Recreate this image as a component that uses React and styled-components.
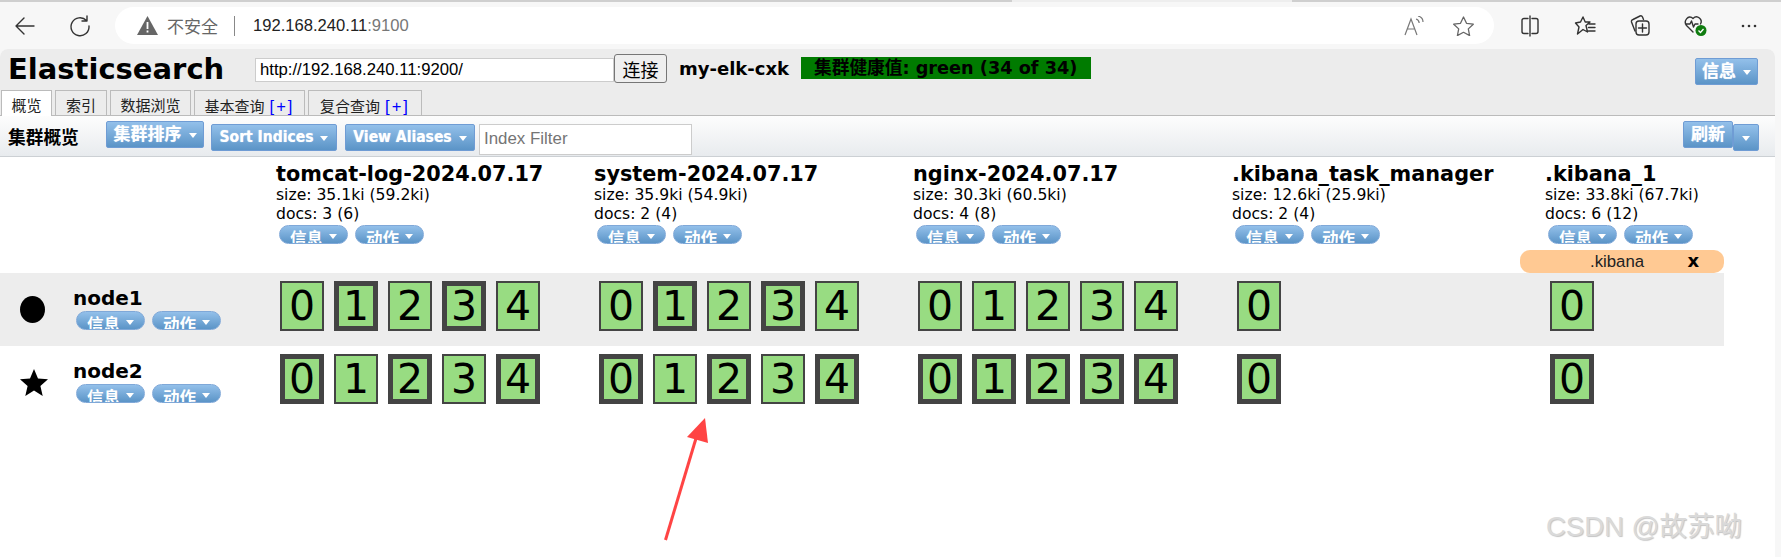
import React from 'react'
import styled, { createGlobalStyle } from 'styled-components'

const CJK = '"Noto Sans CJK SC"'
const VERDANA = `"DejaVu Sans", ${CJK}, sans-serif`
const ARIAL = `"Liberation Sans", ${CJK}, sans-serif`

const Global = createGlobalStyle`
  html, body { margin: 0; padding: 0; background: #f7f7f7; }
  * { box-sizing: border-box; }
`

const Window = styled.div`
  position: relative;
  width: 1781px;
  height: 557px;
  overflow: hidden;
  background: #f7f7f7;
  display: flex;
  flex-direction: column;
`

/* ---- browser bar ---- */
const TopEdge = styled.div`
  height: 2px;
  display: grid;
  grid-template-columns: 1012px 280px 1fr;
  background: #eeeeee;
`
const TopSeg = styled.div`
  background: ${p => (p.$on ? '#cfcfcf' : 'transparent')};
`
const BrowserBar = styled.div`
  height: 47px;
  display: flex;
  align-items: center;
  padding: 0 0 0 15px;
`
const BarIcon = styled.div`
  width: ${p => p.$w || 20}px;
  height: 22px;
  margin-left: ${p => p.$ml || 0}px;
  display: flex;
  align-items: center;
  justify-content: center;
  flex: none;
  svg { display: block; overflow: visible; }
`
const UrlPill = styled.div`
  width: 1379px;
  height: 37px;
  margin-left: 25px;
  background: #fff;
  border-radius: 19px;
  display: flex;
  align-items: center;
  padding-left: 22px;
  flex: none;
`
const Insecure = styled.span`
  font: 17px ${ARIAL};
  color: #666;
  margin-left: 9px;
`
const Sep = styled.span`
  width: 1px;
  height: 20px;
  background: #888;
  margin: 0 18px 0 16px;
`
const Host = styled.span`
  font: 16.6px ${ARIAL};
  color: #222;
`
const Port = styled.span`
  font: 16.6px ${ARIAL};
  color: #777;
`
const PillEnd = styled.div`
  margin-left: auto;
  display: flex;
  align-items: center;
  padding-right: 20px;
  gap: 29px;
`

/* ---- page ---- */
const Page = styled.div`
  flex: 1;
  margin-right: 6px;
  background: #fff;
  border-radius: 8px 8px 0 0;
  overflow: hidden;
  display: flex;
  flex-direction: column;
`
const Header = styled.div`
  height: 67px;
  background: #ececec;
  border-bottom: 1px solid #bbb;
  position: relative;
  flex: none;
`
const HeaderRow = styled.div`
  height: 41px;
  display: flex;
  align-items: flex-start;
  padding-left: 8px;
`
const Title = styled.div`
  font: bold 29px/40px ${VERDANA};
  color: #000;
  width: 247px;
  flex: none;
`
const UriInput = styled.input`
  width: 359px;
  height: 24px;
  margin-top: 9px;
  border: 1px solid #ccc;
  background: #fff;
  font: 16.7px ${ARIAL};
  padding: 0 4px;
  color: #000;
  flex: none;
`
const Connect = styled.button`
  width: 53px;
  height: 29px;
  margin-top: 5px;
  border: 1px solid #767676;
  border-radius: 3px;
  background: #efefef;
  font: 18px ${ARIAL};
  color: #000;
  padding: 0;
  flex: none;
`
const ClusterName = styled.div`
  font: bold 18px/40px ${VERDANA};
  margin-left: 12px;
  width: 122px;
  white-space: nowrap;
  flex: none;
`
const Health = styled.div`
  width: 290px;
  height: 22px;
  margin-top: 8px;
  background: #007b00;
  font: bold 17.7px/22px ${VERDANA};
  color: #000;
  padding-left: 13px;
  white-space: nowrap;
  overflow: hidden;
  flex: none;
`
const HeaderEnd = styled.div`
  margin-left: auto;
  margin-right: 17px;
  margin-top: 9px;
`
const Tabs = styled.div`
  position: absolute;
  left: 1px;
  bottom: -1px;
  display: flex;
  gap: 3px;
  height: 26px;
`
const Tab = styled.div`
  width: ${p => p.$w}px;
  border: 1px solid #bbb;
  border-bottom: ${p => (p.$active ? 'none' : '1px solid #bbb')};
  background: ${p => (p.$active ? '#fff' : '#ececec')};
  font: 15px/30px ${ARIAL};
  color: #222;
  text-align: center;
  white-space: nowrap;
  overflow: hidden;
  b { font-weight: normal; font-size: 16.5px; color: #00f; margin-left: 5px; letter-spacing: 2px; }
`
const Toolbar = styled.div`
  height: 41px;
  flex: none;
  background: linear-gradient(#fdfdfd, #e8ebee);
  border-bottom: 1px solid #ccd0d4;
  display: flex;
  align-items: flex-start;
  padding-left: 8px;
  padding-top: 8px;
`
const ToolLabel = styled.div`
  font: bold 17.7px/24px ${CJK}, sans-serif;
  width: 98px;
  flex: none;
`
const Btn = styled.div`
  height: 27px;
  width: ${p => p.$w}px;
  margin-right: ${p => p.$mr || 0}px;
  margin-top: ${p => (p.$pressed ? -3 : 0)}px;
  border: 1px solid #6f9cd4;
  border-radius: 2px;
  background: linear-gradient(#93c0ea, #5b94c7);
  color: #fff;
  font: bold ${p => p.$fs || 15.5}px/25px ${VERDANA};
  font-stretch: condensed;
  display: flex;
  align-items: center;
  justify-content: center;
  gap: 7px;
  white-space: nowrap;
  flex: none;
  text-shadow: 0 0 1px #d8e8f8;
`
const Caret = styled.i`
  width: 0;
  height: 0;
  border-style: solid;
  border-width: 5px 4.5px 0;
  border-color: #fff transparent transparent;
  margin-top: 2px;
`
const Filter = styled.input`
  width: 213px;
  height: 31px;
  margin-left: -1px;
  border: 1px solid #ccc;
  background: #fff;
  font: 16.9px ${ARIAL};
  padding: 0 4px 2px;
  flex: none;
  &::placeholder { color: #757575; }
`
const ToolEnd = styled.div`
  margin-left: auto;
  margin-right: 16px;
  display: flex;
  align-items: flex-start;
`

/* ---- cluster overview ---- */
const Overview = styled.div`
  display: grid;
  grid-template-columns: 276px 318px 319px 319px 313px 179px;
  grid-template-rows: 116px 73px 73px;
  width: 1724px;
`
const IndexHead = styled.div`
  padding-top: 6px;
  position: relative;
`
const IndexName = styled.div`
  font: bold 20.8px/23px ${VERDANA};
  color: #000;
  white-space: nowrap;
`
const IndexStat = styled.div`
  font: 15.6px/19px ${VERDANA};
  color: #000;
  white-space: nowrap;
`
const PillRow = styled.div`
  display: flex;
  gap: 7px;
  margin: 1px 0 0 3px;
`
const Pill = styled.div`
  width: 69px;
  height: 19px;
  border: 1px solid #7fa8d8;
  border-radius: 10px;
  background: linear-gradient(#93c0ea, #5b94c7);
  color: #fff;
  font: bold 16.5px/25px ${CJK}, sans-serif;
  display: flex;
  align-items: flex-start;
  justify-content: center;
  gap: 6px;
  overflow: hidden;
  ${Caret} { margin-top: 8px; }
`
const Alias = styled.div`
  position: absolute;
  left: -25px;
  bottom: 0;
  width: 204px;
  height: 23px;
  background: #ffc993;
  border-radius: 10px;
  font: 16.8px/23px ${ARIAL};
  color: #222;
  padding-left: 70px;
  b {
    position: absolute;
    right: 25px;
    top: 0;
    font: bold 18px/22px ${VERDANA};
    color: #000;
  }
`
const NodeCell = styled.div`
  background: ${p => (p.$shaded ? '#ededed' : 'transparent')};
  display: flex;
  padding-left: 20px;
`
const Marker = styled.div`
  width: 53px;
  padding-top: ${p => p.$pt}px;
  flex: none;
`
const NodeName = styled.div`
  font: bold 20px/22px ${VERDANA};
  color: #000;
  margin: 14px 0 2px;
`
const Shards = styled.div`
  background: ${p => (p.$shaded ? '#ededed' : 'transparent')};
  display: flex;
  gap: 10px;
  padding: 8px 0 0 ${p => p.$pad}px;
`
const Shard = styled.div`
  width: 44px;
  height: 50px;
  border: ${p => (p.$primary ? 5 : 2)}px solid #444;
  background: #98dc82;
  font: 41px/${p => (p.$primary ? 40 : 46)}px ${VERDANA};
  color: #000;
  text-align: center;
`

/* ---- things drawn over the page ---- */
const ArrowMark = styled.svg`
  position: absolute;
  left: 650px;
  top: 410px;
`
const Watermark = styled.div`
  position: absolute;
  left: 1546px;
  top: 511px;
  font: 27.5px/32px ${ARIAL};
  color: #dadada;
  text-shadow: 1px 1px 1px #c4c4c4;
  white-space: nowrap;
`

const stroke = { fill: 'none', stroke: '#333', strokeWidth: 1.4, strokeLinecap: 'round', strokeLinejoin: 'round' }

const indices = [
  { name: 'tomcat-log-2024.07.17', size: '35.1ki (59.2ki)', docs: '3 (6)', shards: [0, 1, 2, 3, 4], p1: [1, 3], p2: [0, 2, 4], pad: 4 },
  { name: 'system-2024.07.17', size: '35.9ki (54.9ki)', docs: '2 (4)', shards: [0, 1, 2, 3, 4], p1: [1, 3], p2: [0, 2, 4], pad: 5 },
  { name: 'nginx-2024.07.17', size: '30.3ki (60.5ki)', docs: '4 (8)', shards: [0, 1, 2, 3, 4], p1: [], p2: [0, 1, 2, 3, 4], pad: 5 },
  { name: '.kibana_task_manager', size: '12.6ki (25.9ki)', docs: '2 (4)', shards: [0], p1: [], p2: [0], pad: 5 },
  { name: '.kibana_1', size: '33.8ki (67.7ki)', docs: '6 (12)', shards: [0], p1: [], p2: [0], pad: 5, alias: '.kibana' },
]

const Pills = () => (
  <PillRow>
    <Pill>信息<Caret /></Pill>
    <Pill>动作<Caret /></Pill>
  </PillRow>
)

const App = () => (
  <Window>
    <Global />
    <TopEdge>
      <TopSeg $on />
      <TopSeg />
      <TopSeg $on />
    </TopEdge>
    <BrowserBar>
      <BarIcon>
        <svg width="20" height="18" viewBox="0 0 20 18" {...stroke}><path d="M19 9H1M9 1 1 9l8 8" /></svg>
      </BarIcon>
      <BarIcon $ml={35}>
        <svg width="20" height="20" viewBox="0 0 20 20" {...stroke}><path d="M16.5 4.5A9 9 0 1 0 19 10M17 0v5h-5" /></svg>
      </BarIcon>
      <UrlPill>
        <svg width="21" height="19" viewBox="0 0 21 19"><path d="M10.5 0 21 19H0z" fill="#666" /><path d="M9.6 6h1.8v7H9.6zM9.6 14.5h1.8v2H9.6z" fill="#fff" /></svg>
        <Insecure>不安全</Insecure>
        <Sep />
        <Host>192.168.240.11</Host>
        <Port>:9100</Port>
        <PillEnd>
          <svg width="20" height="20" viewBox="0 0 20 20" fill="none" stroke="#777" strokeWidth="1.2"><path d="M1 19 7 3l6 16M3 13h8M12 3c2 .5 3 2 3.2 4M14 0c3 .8 5 3 5 6" /></svg>
          <svg width="21" height="20" viewBox="0 0 21 20" fill="none" stroke="#666" strokeWidth="1.3" strokeLinejoin="round"><path d="m10.5 1 3 6.3 6.8.9-5 4.7 1.3 6.7-6.1-3.3-6.1 3.3 1.3-6.7-5-4.7 6.8-.9z" /></svg>
        </PillEnd>
      </UrlPill>
      <BarIcon $ml={26}>
        <svg width="18" height="20" viewBox="0 0 18 20" {...stroke}><path d="M7 2.5H3a2 2 0 0 0-2 2v11a2 2 0 0 0 2 2h4M11 2.5h4a2 2 0 0 1 2 2v11a2 2 0 0 1-2 2h-4M9 0v20" /></svg>
      </BarIcon>
      <BarIcon $ml={35}>
        <svg width="21" height="20" viewBox="0 0 21 20" {...stroke}><path d="m8 1 2.2 5H15L11 9.500 12.500 16 8 13.500 2.500 18 4 11 0.500 7 5.500 6zM14 8h6M13.500 11.500H20M13.500 15H20" /></svg>
      </BarIcon>
      <BarIcon $ml={35}>
        <svg width="20" height="21" viewBox="0 0 20 21" {...stroke}><path d="M5 16 1.500 7A2 2 0 0 1 3 4.500L10 1a2 2 0 0 1 2.500 1l1 2.500" /><rect x="6" y="6" width="13" height="14" rx="3" /><path d="M12.500 9v8M8.500 13h8" /></svg>
      </BarIcon>
      <BarIcon $ml={34} $w={23}>
        <svg width="23" height="22" viewBox="0 0 23 22">
          <path d="M9 17 2.500 10.500C-1 6 4.500 -1 9 3.500 13.500 -1 19 5 16.500 9M1.500 9H6l1.500-3 2 6 1.500-3h3" {...stroke} />
          <circle cx="17" cy="15.500" r="5.500" fill="#107c10" />
          <path d="m14.500 15.500 2 2 3-3.500" fill="none" stroke="#fff" strokeWidth="1.300" />
        </svg>
      </BarIcon>
      <BarIcon $ml={34} $w={16}>
        <svg width="16" height="4" viewBox="0 0 16 4" fill="#333"><circle cx="2" cy="2" r="1.300" /><circle cx="8" cy="2" r="1.300" /><circle cx="14" cy="2" r="1.300" /></svg>
      </BarIcon>
    </BrowserBar>
    <Page>
      <Header>
        <HeaderRow>
          <Title>Elasticsearch</Title>
          <UriInput defaultValue="http://192.168.240.11:9200/" />
          <Connect>连接</Connect>
          <ClusterName>my-elk-cxk</ClusterName>
          <Health>集群健康值: green (34 of 34)</Health>
          <HeaderEnd><Btn $w={63} $fs={17}>信息<Caret /></Btn></HeaderEnd>
        </HeaderRow>
        <Tabs>
          <Tab $w={51} $active>概览</Tab>
          <Tab $w={52}>索引</Tab>
          <Tab $w={81}>数据浏览</Tab>
          <Tab $w={111}>基本查询<b>[+]</b></Tab>
          <Tab $w={114}>复合查询<b>[+]</b></Tab>
        </Tabs>
      </Header>
      <Toolbar>
        <ToolLabel>集群概览</ToolLabel>
        <Btn $w={98} $mr={7} $fs={17} $pressed>集群排序<Caret /></Btn>
        <Btn $w={126} $mr={8}>Sort Indices<Caret /></Btn>
        <Btn $w={130} $mr={5}>View Aliases<Caret /></Btn>
        <Filter placeholder="Index Filter" />
        <ToolEnd>
          <Btn $w={50} $fs={17} $pressed>刷新</Btn>
          <Btn $w={26}><Caret /></Btn>
        </ToolEnd>
      </Toolbar>
      <Overview>
        <div />
        {indices.map(ix => (
          <IndexHead key={ix.name}>
            <IndexName>{ix.name}</IndexName>
            <IndexStat>size: {ix.size}</IndexStat>
            <IndexStat>docs: {ix.docs}</IndexStat>
            <Pills />
            {ix.alias && <Alias>{ix.alias}<b>x</b></Alias>}
          </IndexHead>
        ))}
        <NodeCell $shaded>
          <Marker $pt={23}>
            <svg width="25" height="27" viewBox="0 0 25 27"><ellipse cx="12.500" cy="13.500" rx="12.500" ry="13.500" /></svg>
          </Marker>
          <div>
            <NodeName>node1</NodeName>
            <Pills />
          </div>
        </NodeCell>
        {indices.map(ix => (
          <Shards key={ix.name} $pad={ix.pad} $shaded>
            {ix.shards.map(s => <Shard key={s} $primary={ix.p1.includes(s)}>{s}</Shard>)}
          </Shards>
        ))}
        <NodeCell>
          <Marker $pt={23}>
            <svg width="28" height="27" viewBox="0 0 28 27"><path d="m14 0 4 9.500 10 .8-7.600 6.600 2.300 10L14 21.600 5.300 27l2.300-10L0 10.300l10-.8z" /></svg>
          </Marker>
          <div>
            <NodeName>node2</NodeName>
            <Pills />
          </div>
        </NodeCell>
        {indices.map(ix => (
          <Shards key={ix.name} $pad={ix.pad}>
            {ix.shards.map(s => <Shard key={s} $primary={ix.p2.includes(s)}>{s}</Shard>)}
          </Shards>
        ))}
      </Overview>
    </Page>
    <ArrowMark width="70" height="140" viewBox="0 0 70 140">
      <path d="M15.500 130 47 25" stroke="#ff4444" strokeWidth="3" fill="none" />
      <path d="M55 8 37 27l21 6z" fill="#ff4444" />
    </ArrowMark>
    <Watermark>CSDN @故苏呦</Watermark>
  </Window>
)

export default App
